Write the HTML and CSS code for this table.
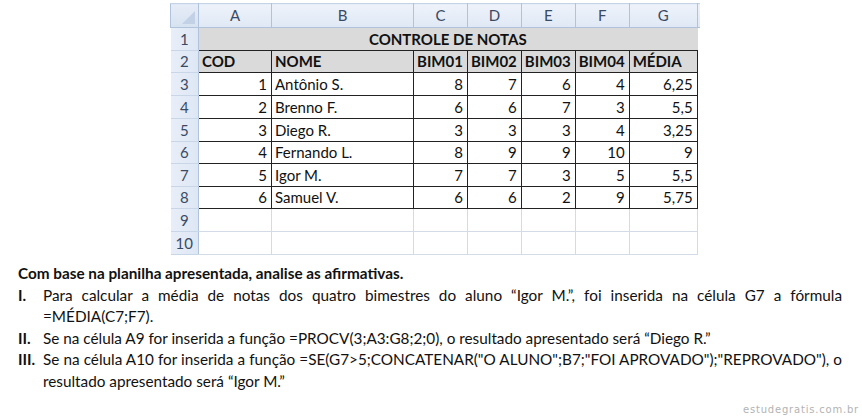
FILE: index.html
```html
<!DOCTYPE html>
<html lang="pt-BR">
<head>
<meta charset="utf-8">
<title>Controle de Notas</title>
<link rel="stylesheet" href="styles.css">
</head>
<body>
<div class="page">
  <table class="sheet">
    <colgroup>
      <col class="c-rh"><col class="c-a"><col class="c-b"><col class="c-n"><col class="c-n"><col class="c-n"><col class="c-f"><col class="c-g"><col class="c-x">
    </colgroup>
    <thead>
      <tr class="colhead">
        <th class="corner"><span class="tri"></span></th>
        <th>A</th><th>B</th><th>C</th><th>D</th><th>E</th><th>F</th><th>G</th><th class="xh"></th>
      </tr>
    </thead>
    <tbody>
      <tr class="r23">
        <th class="rh">1</th>
        <td colspan="7" class="title">CONTROLE DE NOTAS</td><td class="x"></td>
      </tr>
      <tr class="r22 hdr">
        <th class="rh">2</th>
        <td class="d l">COD</td><td class="d l">NOME</td><td class="d l">BIM01</td><td class="d l">BIM02</td><td class="d l">BIM03</td><td class="d l">BIM04</td><td class="d l">MÉDIA</td><td class="x"></td>
      </tr>
      <tr class="r23">
        <th class="rh">3</th>
        <td class="d">1</td><td class="d l">Antônio S.</td><td class="d">8</td><td class="d">7</td><td class="d">6</td><td class="d">4</td><td class="d">6,25</td><td class="x"></td>
      </tr>
      <tr class="r23">
        <th class="rh">4</th>
        <td class="d">2</td><td class="d l">Brenno F.</td><td class="d">6</td><td class="d">6</td><td class="d">7</td><td class="d">3</td><td class="d">5,5</td><td class="x"></td>
      </tr>
      <tr class="r23">
        <th class="rh">5</th>
        <td class="d">3</td><td class="d l">Diego R.</td><td class="d">3</td><td class="d">3</td><td class="d">3</td><td class="d">4</td><td class="d">3,25</td><td class="x"></td>
      </tr>
      <tr class="r22">
        <th class="rh">6</th>
        <td class="d">4</td><td class="d l">Fernando L.</td><td class="d">8</td><td class="d">9</td><td class="d">9</td><td class="d">10</td><td class="d">9</td><td class="x"></td>
      </tr>
      <tr class="r23">
        <th class="rh">7</th>
        <td class="d">5</td><td class="d l">Igor M.</td><td class="d">7</td><td class="d">7</td><td class="d">3</td><td class="d">5</td><td class="d">5,5</td><td class="x"></td>
      </tr>
      <tr class="r22">
        <th class="rh">8</th>
        <td class="d">6</td><td class="d l">Samuel V.</td><td class="d">6</td><td class="d">6</td><td class="d">2</td><td class="d">9</td><td class="d">5,75</td><td class="x"></td>
      </tr>
      <tr class="r23 empty">
        <th class="rh">9</th>
        <td></td><td></td><td></td><td></td><td></td><td></td><td></td><td class="x"></td>
      </tr>
      <tr class="r23 empty">
        <th class="rh">10</th>
        <td></td><td></td><td></td><td></td><td></td><td></td><td></td><td class="x"></td>
      </tr>
    </tbody>
  </table>

  <div class="question">
    <p class="lead">Com base na planilha apresentada, analise as afirmativas.</p>
    <div class="item">
      <span class="num">I.</span>
      <p class="txt">Para calcular a média de notas dos quatro bimestres do aluno “Igor M.”, foi inserida na célula G7 a fórmula =MÉDIA(C7;F7).</p>
    </div>
    <div class="item">
      <span class="num">II.</span>
      <p class="txt">Se na célula A9 for inserida a função =PROCV(3;A3:G8;2;0), o resultado apresentado será “Diego R.”</p>
    </div>
    <div class="item">
      <span class="num">III.</span>
      <p class="txt">Se na célula A10 for inserida a função =SE(G7&gt;5;CONCATENAR("O ALUNO";B7;"FOI APROVADO");"REPROVADO"), o resultado apresentado será “Igor M.”</p>
    </div>
  </div>

  <div class="mark">estudegratis.com.br</div>
</div>
</body>
</html>
```

FILE: styles.css
```css
html, body {
  margin: 0;
  padding: 0;
  background: #ffffff;
}

.page {
  width: 862px;
  height: 416px;
  position: relative;
  overflow: hidden;
  font-family: "Lato", "Open Sans", "Liberation Sans", sans-serif;
  color: #111;
}

/* ---------- spreadsheet ---------- */
.sheet {
  margin: 3px 0 0 170px;
  border-collapse: collapse;
  table-layout: fixed;
  font-size: 15px;
  line-height: 1;
}

.c-rh { width: 28px; }
.c-a { width: 73px; }
.c-b { width: 142px; }
.c-n { width: 52px; }
.c-f { width: 53px; }
.c-g { width: 68px; }
.c-x { width: 3px; }

.sheet th,
.sheet td {
  padding: 0;
  overflow: hidden;
  white-space: nowrap;
}

.colhead th {
  height: 23px;
  background: linear-gradient(#eef3fa, #dfe8f5);
  border: 1px solid #b1c3da;
  border-top-color: #c5d3e6;
  color: #3b4a63;
  font-weight: normal;
  text-align: center;
  font-size: 15px;
}

.colhead .xh {
  border-right: none;
}

.corner {
  position: relative;
  background: linear-gradient(#e6edf7, #d7e2f1) !important;
}

.tri {
  position: absolute;
  right: 3px;
  bottom: 3px;
  width: 0;
  height: 0;
  border-left: 13px solid transparent;
  border-bottom: 13px solid #c2d1e6;
}

.rh {
  background: linear-gradient(90deg, #e8eef8, #dde7f4);
  border: 1px solid #b1c3da;
  border-left: none;
  border-top-color: #c9d6e8;
  border-bottom-color: #c9d6e8;
  color: #3b4a63;
  font-weight: normal;
  text-align: center;
  font-size: 15px;
}

.r22 { height: 22px; }
.r23 { height: 23px; }

.sheet td {
  border: 1px solid #d4dbe8;
}

.title {
  background: #dadada;
  font-weight: bold;
  text-align: center;
  color: #111;
  border-bottom: 1px solid #222 !important;
  border-top-color: #c5d3e6 !important;
}

.sheet td.d {
  border: 1px solid #222;
  text-align: right;
  padding: 0 4px 0 3px;
  color: #111;
}

.sheet td.l {
  text-align: left;
  padding-left: 3px;
}

.hdr td.d {
  background: #dadada;
  font-weight: bold;
}

.sheet td.x {
  border-top: none;
  border-bottom: none;
  border-right: none;
}

.empty td {
  border-color: #d4dbe8;
}

/* ---------- question text ---------- */
.question {
  margin: 8px 20px 0 18px;
  font-size: 15.3px;
  line-height: 21.5px;
  color: #111;
}

.question p {
  margin: 0;
}

.lead {
  font-weight: bold;
}

.item {
  display: grid;
  grid-template-columns: 25px 1fr;
}

.num {
  font-weight: bold;
}

.txt {
  text-align: justify;
}

.mark {
  position: absolute;
  right: 3px;
  bottom: 1px;
  font-family: "DejaVu Sans", sans-serif;
  font-size: 10px;
  letter-spacing: 0.8px;
  color: #b3b3b3;
}
```
